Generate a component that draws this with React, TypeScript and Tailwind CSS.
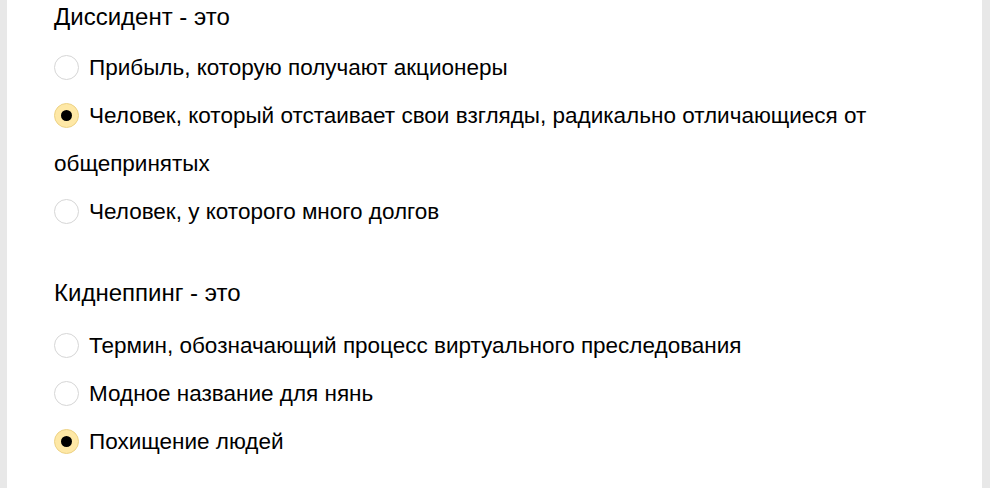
type Question = {
  title: string
  options: string[]
  selected: number
}

const questions: Question[] = [
  {
    title: 'Диссидент - это',
    options: [
      'Прибыль, которую получают акционеры',
      'Человек, который отстаивает свои взгляды, радикально отличающиеся от общепринятых',
      'Человек, у которого много долгов',
    ],
    selected: 1,
  },
  {
    title: 'Киднеппинг - это',
    options: [
      'Термин, обозначающий процесс виртуального преследования',
      'Модное название для нянь',
      'Похищение людей',
    ],
    selected: 2,
  },
]

function Radio({ checked }: { checked: boolean }) {
  return (
    <span
      className={`inline-flex w-[25px] h-[25px] rounded-full border items-center justify-center align-middle mr-[10px] -mt-[3px] ${
        checked ? 'bg-[#fee8a6] border-[#edd285]' : 'bg-white border-[#d6d6d6]'
      }`}
    >
      {checked && <span className="w-[11px] h-[11px] rounded-full bg-black" />}
    </span>
  )
}

export default function App() {
  return (
    <div className="w-[990px] h-[488px] bg-[#e8e8e8] overflow-hidden flex">
      <div className="ml-[7px] w-[975px] h-full bg-white pl-[47px] pr-[60px] pt-[4px] font-['Liberation_Sans',Arial,sans-serif] text-black">
        {questions.map((q, qi) => (
          <div key={qi} className={qi > 0 ? 'mt-[44px]' : ''}>
            <p className={`text-[24px] leading-[26px] ${qi > 0 ? 'mb-[16px]' : 'mb-[14px]'}`}>{q.title}</p>
            {q.options.map((opt, oi) => (
              <label key={oi} className="block text-[22.5px] leading-[48px] cursor-pointer">
                <Radio checked={oi === q.selected} />
                {opt}
              </label>
            ))}
          </div>
        ))}
      </div>
    </div>
  )
}
